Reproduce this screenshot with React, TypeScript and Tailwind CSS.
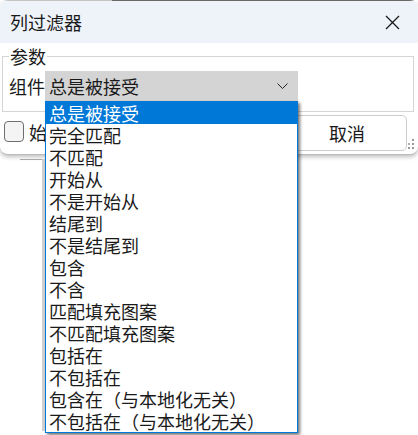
import React from 'react';

const options = [
  '总是被接受',
  '完全匹配',
  '不匹配',
  '开始从',
  '不是开始从',
  '结尾到',
  '不是结尾到',
  '包含',
  '不含',
  '匹配填充图案',
  '不匹配填充图案',
  '包括在',
  '不包括在',
  '包含在（与本地化无关）',
  '不包括在（与本地化无关）',
];

const font = { fontFamily: '"Noto Sans CJK SC", "Noto Sans", sans-serif' };

const CloseIcon = () => (
  <svg width="15" height="15" viewBox="0 0 15 15" className="block">
    <path d="M1 1 L14 14 M14 1 L1 14" stroke="#1a1a1a" strokeWidth="1.3" fill="none" />
  </svg>
);

const Chevron = () => (
  <svg width="11" height="6" viewBox="0 0 11 6" className="block">
    <path d="M0.5 0.5 L5.5 5.5 L10.5 0.5" stroke="#222" strokeWidth="1" fill="none" />
  </svg>
);

const Grip = () => (
  <svg width="6" height="12" viewBox="0 0 6 12" className="block">
    <rect x="4" y="1" width="2" height="2" fill="#9a9a9a" />
    <rect x="4" y="5" width="2" height="2" fill="#9a9a9a" />
    <rect x="4" y="9" width="2" height="2" fill="#9a9a9a" />
    <rect x="0" y="9" width="2" height="2" fill="#9a9a9a" />
    <rect x="0" y="5" width="2" height="2" fill="#b0b0b0" />
  </svg>
);

export default function App() {
  return (
    <div className="relative w-[418px] h-[435px] overflow-hidden bg-white text-[#1a1a1a]" style={font}>
      {/* Dialog */}
      <div className="w-[418px] h-[155px] rounded-lg bg-white border-b border-[#bcbcbc] shadow-[0_2px_4px_rgba(0,0,0,0.25)] overflow-hidden">
        <div className="flex h-[1px]">
          <div className="w-[112px] bg-[#c4c4c4]" />
          <div className="flex-1 bg-[#6a6a6a]" />
        </div>
        <div className="h-[42px] bg-[#eef2f9] flex items-center justify-between pl-[10px] pr-[18px]">
          <span className="text-[18px] leading-[20px]">列过滤器</span>
          <CloseIcon />
        </div>

        <div className="pl-[2px] pr-[4px]">
          <fieldset className="mt-[5px] border border-[#d5d5d5] pl-[6px] pr-[6px] pb-[10px]">
            <legend className="px-[1px] text-[18px] leading-[16px]">参数</legend>
            <div className="flex items-center mt-[7px]">
              <span className="w-[36px] text-[18px] leading-[22px]">组件</span>
              <div className="w-[253px] h-[30px] bg-[#d4d4d4] flex items-center justify-between pl-[4px] pr-[10px]">
                <span className="text-[18px] leading-[22px]">总是被接受</span>
                <Chevron />
              </div>
            </div>
          </fieldset>

          <div className="flex justify-between mt-[3px]">
            <div className="flex items-start mt-[6px] ml-[2px]">
              <div className="w-[20px] h-[21px] rounded-[4px] border border-[#6e6e6e] bg-[#f4f4f4]" />
              <span className="ml-[5px] text-[18px] leading-[22px]">始终显示</span>
            </div>
            <div className="flex items-end">
              <button className="w-[120px] h-[36px] rounded-[5px] border border-[#cccccc] bg-white text-[18px] leading-[22px]">
                取消
              </button>
              <div className="ml-[1px] mb-[1px]">
                <Grip />
              </div>
            </div>
          </div>
        </div>
      </div>

      {/* Background window fragment */}
      <div className="flex mt-[4px]">
        <div className="w-[22px] h-[1px] ml-[20px] bg-[#a8a8a8]" />
        <div className="w-[3px] h-[272px] bg-[#d0d0d0]" />
      </div>

      {/* Open dropdown list */}
      <div className="absolute left-[45px] top-[101px] w-[253px] border border-[#0078d7] bg-white shadow-[2px_2px_3px_rgba(0,0,0,0.55)]">
        {options.map((o, i) => (
          <div
            key={o}
            className={`h-[22px] pl-[3px] text-[18px] leading-[22px] whitespace-nowrap ${
              i === 0 ? 'bg-[#0078d7] text-white' : 'text-[#1a1a1a]'
            }`}
          >
            {o}
          </div>
        ))}
      </div>
    </div>
  );
}
